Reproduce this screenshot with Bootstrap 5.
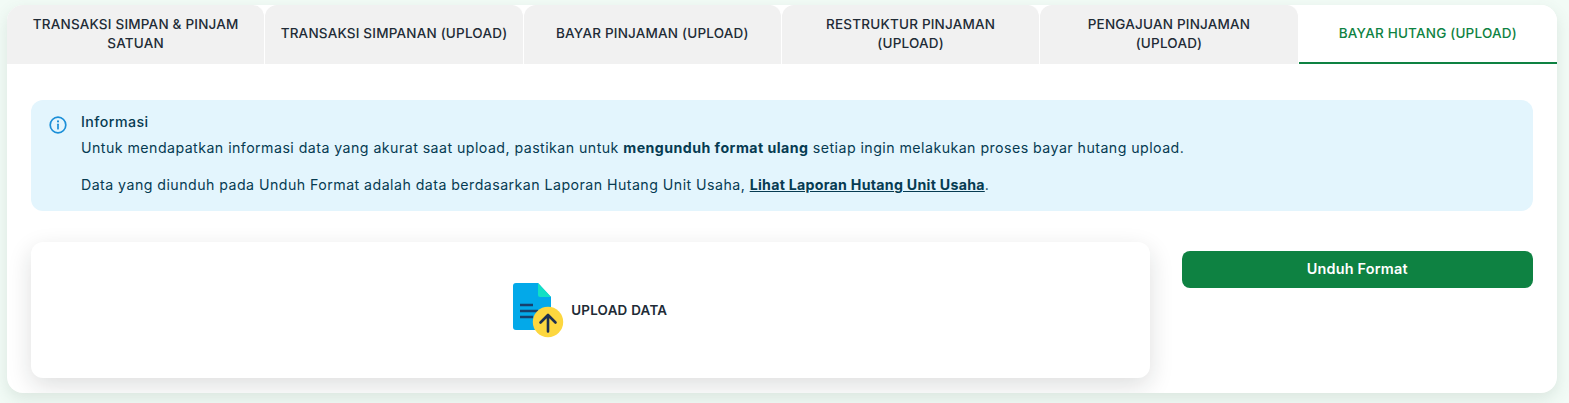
<!DOCTYPE html>
<html lang="id">
<head>
<meta charset="utf-8">
<title>Bayar Hutang (Upload)</title>
<link href="https://cdn.jsdelivr.net/npm/bootstrap@5.3.0/dist/css/bootstrap.min.css" rel="stylesheet">
<style>
html,body{height:403px;overflow:hidden}
body{background:#f2fbf6;font-family:Inter,"Liberation Sans",sans-serif;color:#212b36;padding:5px 12px 10px 7px}
.shell{background:#fff;border-radius:16px;height:388px;box-shadow:0 6px 16px rgba(60,90,75,.13);overflow:hidden}
.tabbar{height:59px}
.tabbar .nav-item{flex:1 1 0;min-width:0}
.tabbar .nav-link{height:59px;width:100%;background:#f1f1f1;border:0;border-right:1px solid #fff;border-radius:12px 12px 0 0;color:#212b36;font-size:13.5px;letter-spacing:.2px;font-weight:500;line-height:19px;padding:0 14px 2px;margin:0;display:flex;align-items:center;justify-content:center;text-align:center}
.tabbar .nav-link.active{background:#fff;color:#0e8242;border-right:0;border-bottom:2px solid #0e8242;padding-bottom:0;border-radius:12px 12px 0 0}
.pane{padding:36px 24px 0}
.info-box{background:#e3f5fd;border-radius:12px;height:111px;padding:12px 18px;color:#063b52;font-size:14.2px;letter-spacing:.45px;line-height:22px;margin:0;column-gap:14px}
.info-box b{font-weight:700}
.info-box a{color:#063b52;font-weight:700;letter-spacing:.27px}
.info-icon{margin-top:4px}
.info-head{font-weight:500;font-size:14.2px;line-height:20px;margin-bottom:5px}
.info-gap{margin-top:15px}
.row-gap{--bs-gutter-x:32px;margin-top:31px}
.drop-zone{height:136px;background:#fff;border-radius:12px;box-shadow:0 8px 24px rgba(20,25,30,.14);font-size:13.4px;letter-spacing:.25px;font-weight:600;color:#212b36;column-gap:7px}
.drop-label{padding-top:1px}
.btn-format{display:block;width:100%;height:37px;margin-top:9px;background:#0e8242;border:0;border-radius:8px;color:#fff;font-size:14.4px;letter-spacing:.2px;font-weight:600;padding:0 0 2px}
.btn-format:hover{background:#0e8242;color:#fff}
</style>
</head>
<body>
<div class="shell">
  <ul class="nav tabbar flex-nowrap">
    <li class="nav-item"><button class="nav-link">TRANSAKSI SIMPAN &amp; PINJAM SATUAN</button></li>
    <li class="nav-item"><button class="nav-link">TRANSAKSI SIMPANAN (UPLOAD)</button></li>
    <li class="nav-item"><button class="nav-link">BAYAR PINJAMAN (UPLOAD)</button></li>
    <li class="nav-item"><button class="nav-link">RESTRUKTUR PINJAMAN (UPLOAD)</button></li>
    <li class="nav-item"><button class="nav-link">PENGAJUAN PINJAMAN (UPLOAD)</button></li>
    <li class="nav-item"><button class="nav-link active">BAYAR HUTANG (UPLOAD)</button></li>
  </ul>
  <div class="pane">
    <div class="info-box d-flex">
      <svg class="flex-shrink-0 info-icon" width="18" height="18" viewBox="0 0 18 18" fill="none" stroke="#1b8fd8" stroke-width="1.7" stroke-linecap="round" aria-hidden="true"><circle cx="9" cy="9" r="7.8"/><path d="M9 8.3v4.4"/><path d="M9 5.2v.2" stroke-width="2.1"/></svg>
      <div>
        <div class="info-head">Informasi</div>
        <div>Untuk mendapatkan informasi data yang akurat saat upload, pastikan untuk <b>mengunduh format ulang</b> setiap ingin melakukan proses bayar hutang upload.</div>
        <div class="info-gap">Data yang diunduh pada Unduh Format adalah data berdasarkan Laporan Hutang Unit Usaha, <a href="#">Lihat Laporan Hutang Unit Usaha</a>.</div>
      </div>
    </div>
    <div class="row row-gap">
      <div class="col-9">
        <div class="drop-zone d-flex align-items-center justify-content-center">
          <svg width="51" height="56" viewBox="0 0 51 56" aria-hidden="true">
            <path d="M3 1H25L38 15V45a3 3 0 0 1-3 3H3a3 3 0 0 1-3-3V4a3 3 0 0 1 3-3Z" fill="#03a9e9"/>
            <path d="M25 1L38 15H27a2 2 0 0 1-2-2Z" fill="#12e0c4"/>
            <path d="M7 23H20M7 29H25M7 35H20" stroke="#17406d" stroke-width="2.4" fill="none"/>
            <circle cx="35" cy="40" r="15.2" fill="#fdd73f"/>
            <path d="M35 49.5V33.5M27.5 40.5L35 33L42.5 40.5" stroke="#1d2f4f" stroke-width="2.6" fill="none" stroke-linecap="round" stroke-linejoin="round"/>
          </svg>
          <span class="drop-label">UPLOAD DATA</span>
        </div>
      </div>
      <div class="col-3">
        <button class="btn btn-format">Unduh Format</button>
      </div>
    </div>
  </div>
</div>
<script src="https://cdn.jsdelivr.net/npm/bootstrap@5.3.0/dist/js/bootstrap.bundle.min.js"></script>
</body>
</html>
